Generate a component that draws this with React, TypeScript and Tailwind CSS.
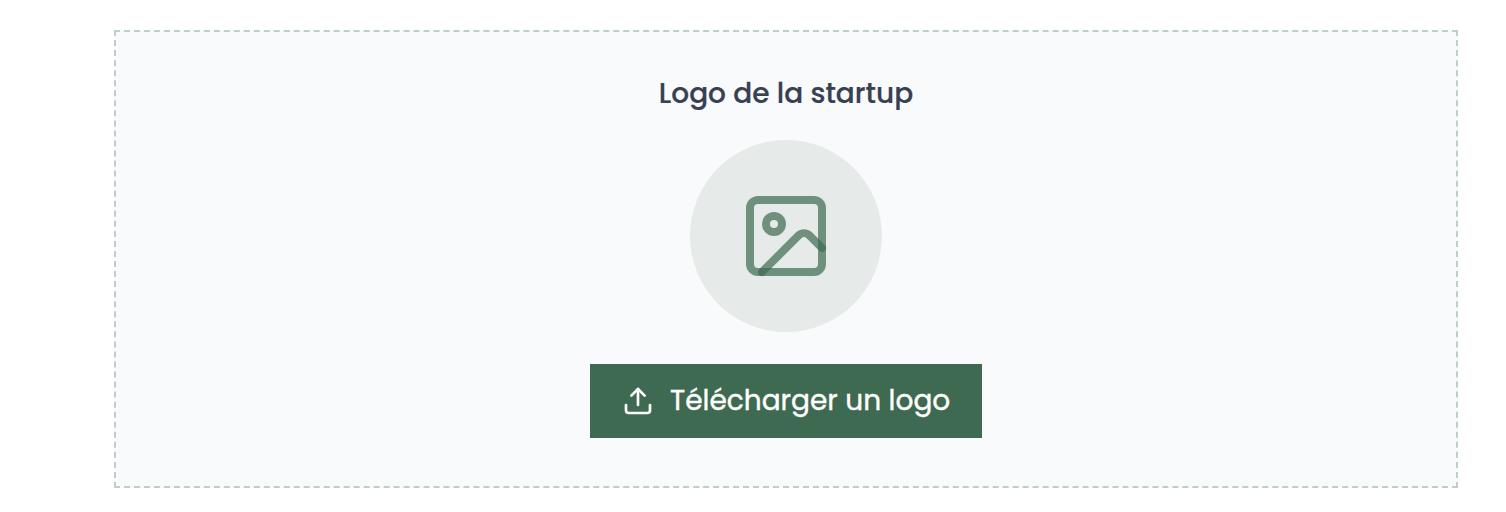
import { Image, Upload } from "lucide-react";

export default function App() {
  return (
    <main className="h-[512px] w-full bg-white pt-[30px] pr-12 pl-[114px] font-['Poppins','Open_Sans',sans-serif]">
      <section className="flex h-[458px] flex-col items-center border-2 border-dashed border-[#bfcec9] bg-[#f9fafc] pt-[42px]">
        <h2 className="h-10 text-[28px] leading-10 font-medium whitespace-nowrap text-[#374151] [-webkit-text-stroke:0.2px_#374151]">Logo de la startup</h2>
        <div className="mt-[26px] flex size-48 items-center justify-center rounded-full bg-[#e6eae9]">
          <Image className="size-24 text-[#3d6a50]/70" strokeWidth={2} />
        </div>
        <button className="mt-8 flex h-[74px] w-[392px] items-center bg-[#3d6a50] pl-8 text-[28px] leading-10 font-normal whitespace-nowrap text-white [-webkit-text-stroke:0.4px_white]">
          <Upload className="mr-4 size-8" strokeWidth={2} />
          Télécharger un logo
        </button>
      </section>
    </main>
  );
}
